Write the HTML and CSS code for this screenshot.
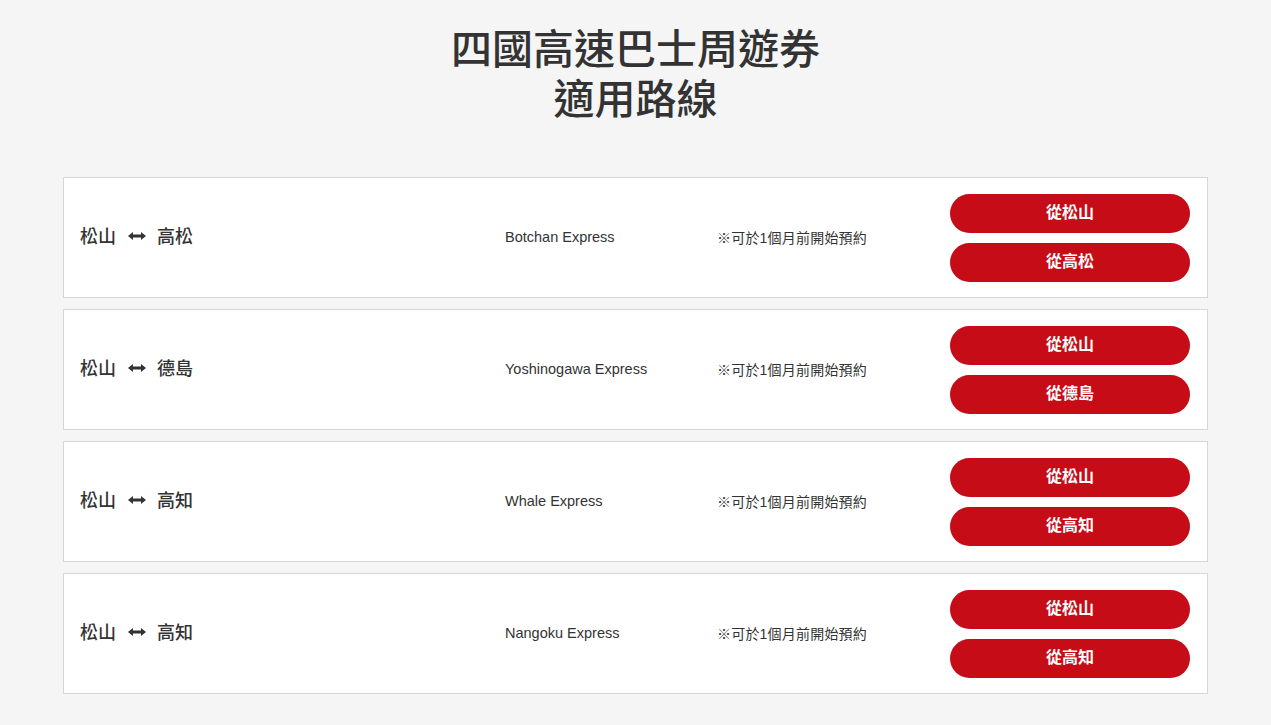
FILE: index.html
```html
<!DOCTYPE html>
<html lang="zh-Hant">
<head>
<meta charset="utf-8">
<title>四國高速巴士周遊券 適用路線</title>
<link rel="stylesheet" href="styles.css">
</head>
<body>
<main class="page">
  <h1 class="title"><span class="title-line">四國高速巴士周遊券</span><span class="title-line">適用路線</span></h1>
  <div class="list">
    <div class="card">
      <div class="route">松山<svg class="arrow" viewBox="0 0 18 10" width="18" height="10"><path d="M0 5 L5 1 L5 3.6 L13 3.6 L13 1 L18 5 L13 9 L13 6.4 L5 6.4 L5 9 Z"/></svg>高松</div>
      <div class="bus">Botchan Express</div>
      <div class="note">※可於1個月前開始預約</div>
      <div class="btns"><a class="btn">從松山</a><a class="btn">從高松</a></div>
    </div>
    <div class="card">
      <div class="route">松山<svg class="arrow" viewBox="0 0 18 10" width="18" height="10"><path d="M0 5 L5 1 L5 3.6 L13 3.6 L13 1 L18 5 L13 9 L13 6.4 L5 6.4 L5 9 Z"/></svg>德島</div>
      <div class="bus">Yoshinogawa Express</div>
      <div class="note">※可於1個月前開始預約</div>
      <div class="btns"><a class="btn">從松山</a><a class="btn">從德島</a></div>
    </div>
    <div class="card">
      <div class="route">松山<svg class="arrow" viewBox="0 0 18 10" width="18" height="10"><path d="M0 5 L5 1 L5 3.6 L13 3.6 L13 1 L18 5 L13 9 L13 6.4 L5 6.4 L5 9 Z"/></svg>高知</div>
      <div class="bus">Whale Express</div>
      <div class="note">※可於1個月前開始預約</div>
      <div class="btns"><a class="btn">從松山</a><a class="btn">從高知</a></div>
    </div>
    <div class="card">
      <div class="route">松山<svg class="arrow" viewBox="0 0 18 10" width="18" height="10"><path d="M0 5 L5 1 L5 3.6 L13 3.6 L13 1 L18 5 L13 9 L13 6.4 L5 6.4 L5 9 Z"/></svg>高知</div>
      <div class="bus">Nangoku Express</div>
      <div class="note">※可於1個月前開始預約</div>
      <div class="btns"><a class="btn">從松山</a><a class="btn">從高知</a></div>
    </div>
  </div>
</main>
</body>
</html>
```
FILE: styles.css
```css
html, body {
  margin: 0;
  padding: 0;
  background: #f5f5f5;
  color: #333;
  font-family: "Liberation Sans", "Noto Sans CJK TC", sans-serif;
}
.page {
  width: 1145px;
  margin: 0 auto;
  padding-top: 21px;
}
.title {
  margin: 0;
  text-align: center;
  font-size: 41px;
  font-weight: 500;
  color: #333;
  font-family: "Noto Sans CJK TC", sans-serif;
  display: flex;
  flex-direction: column;
  align-items: center;
}
.title-line {
  display: block;
  height: 50px;
  line-height: 50px;
}
.list {
  margin-top: 56px;
  display: flex;
  flex-direction: column;
  gap: 11px;
}
.card {
  background: #fff;
  border: 1px solid #d6d6d6;
  height: 119px;
  display: flex;
  align-items: center;
  padding: 0 17px 0 16px;
}
.route {
  width: 425px;
  display: flex;
  align-items: center;
  font-size: 18px;
  font-weight: 500;
  font-family: "Noto Sans CJK TC", sans-serif;
  color: #333;
  padding-bottom: 5px;
}
.arrow {
  display: block;
  margin: 1px 11px 0 12px;
  fill: #333;
}
.bus {
  width: 212px;
  font-size: 14.5px;
  color: #333;
  padding-bottom: 2px;
}
.note {
  flex: 1;
  font-size: 14px;
  letter-spacing: 0.2px;
  color: #333;
  padding-bottom: 2px;
}
.btns {
  display: flex;
  flex-direction: column;
  gap: 10px;
  margin-left: 1px;
}
.btn {
  display: flex;
  align-items: center;
  justify-content: center;
  width: 240px;
  height: 39px;
  border-radius: 20px;
  background: #c60c17;
  color: #fff;
  font-size: 16px;
  font-weight: 700;
  font-family: "Noto Sans CJK TC", sans-serif;
  padding-bottom: 4px;
  box-sizing: border-box;
}
```
